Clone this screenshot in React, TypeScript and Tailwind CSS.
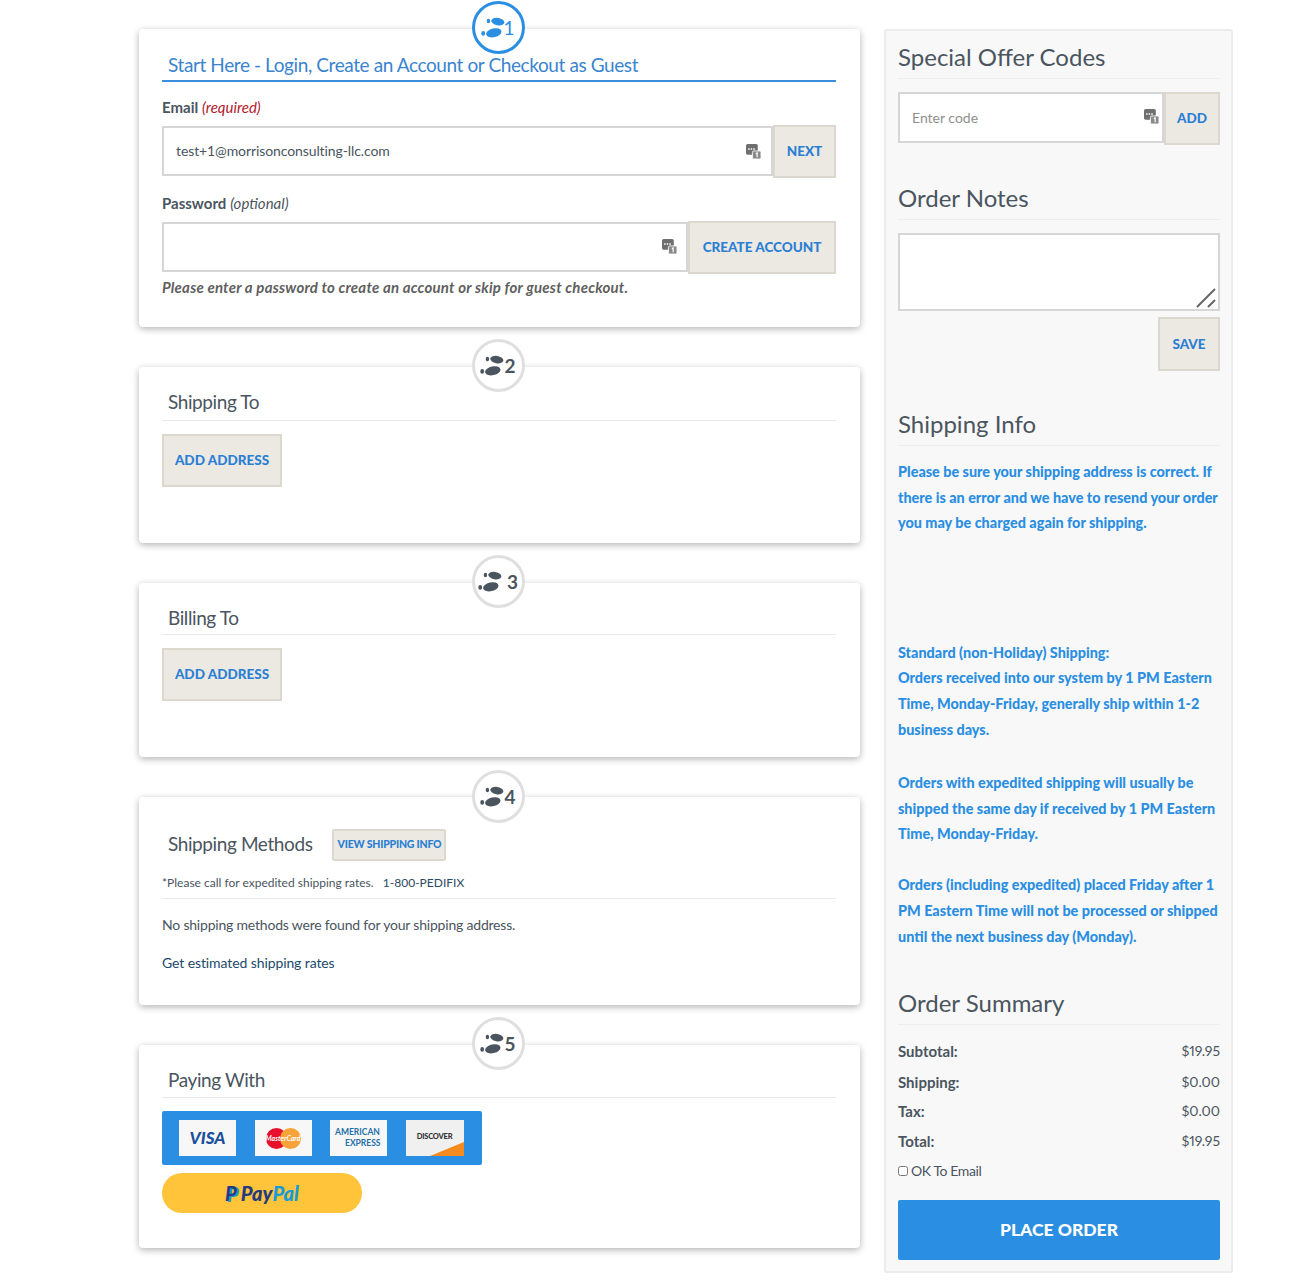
import React from "react";

const font = "font-['Lato','Open_Sans',sans-serif]";

// little password-manager badge that sits inside the inputs
const KeyIcon = ({ className }: { className: string }) => (
  <svg viewBox="0 0 14 14" className={className}>
    <rect x="0" y="0" width="11" height="10" rx="1.5" fill="#6f6f6f" />
    <rect x="6" y="6.5" width="8" height="7.5" rx="1.2" fill="#8a8a8a" stroke="#fff" strokeWidth="0.8" />
    <rect x="2" y="4" width="1.4" height="1.4" fill="#fff" />
    <rect x="4.4" y="4" width="1.4" height="1.4" fill="#fff" />
    <rect x="6.8" y="4" width="1.4" height="1.4" fill="#fff" />
    <path d="M9.2 9 L10.4 8.4 V12.4" stroke="#fff" strokeWidth="1.1" fill="none" />
  </svg>
);

const Feet = ({ className }: { className: string }) => (
  <svg viewBox="0 0 24 21" className={className} fill="currentColor">
    <ellipse cx="16.8" cy="4.6" rx="6.6" ry="3.7" transform="rotate(10 16.8 4.6)" />
    <ellipse cx="7.4" cy="4" rx="1.7" ry="2.3" />
    <ellipse cx="12.8" cy="15.8" rx="7.8" ry="4.4" transform="rotate(-12 12.8 15.8)" />
    <ellipse cx="2.2" cy="16.4" rx="1.9" ry="2.4" />
  </svg>
);

const Step = ({ n, active, extra }: { n: string; active?: boolean; extra?: string }) => (
  <div
    className={`absolute left-[333px] top-[-28px] w-[53px] h-[53px] rounded-full bg-white border-[3px] flex items-center justify-center ${
      active ? "border-[#2a8ee2] text-[#2a8ee2]" : "border-[#dfdfdf] text-[#4a5560]"
    } ${extra ?? ""}`}
  >
    <Feet className="w-[24px] h-[21px] -ml-[1px]" />
    <span className={`text-[19px] leading-none ${active ? "font-normal -ml-[2px]" : "font-bold"}`}>{n}</span>
  </div>
);

const CardTitle = ({ children, h }: { children: React.ReactNode; h: string }) => (
  <div className={`${h} border-b border-[#e9e9e9] pl-[6px] text-[19px] tracking-[-0.4px] leading-[22px] text-[#4a5560]`}>
    {children}
  </div>
);

const BeigeBtn = ({ children, className }: { children: React.ReactNode; className: string }) => (
  <button className={`bg-[#ece9e2] border-2 border-[#dcd8cd] text-[#2a7fd5] text-[13.5px] font-black shrink-0 ${className}`}>
    {children}
  </button>
);

const SideTitle = ({ children, className }: { children: React.ReactNode; className?: string }) => (
  <h3 className={`h-[41px] border-b border-[#eeeeee] text-[24px] leading-[38px] text-[#4a5560] ${className ?? ""}`}>
    {children}
  </h3>
);

const SummaryRow = ({ label, value }: { label: string; value: string }) => (
  <div className="h-[30px] flex items-center justify-between text-[#4a5560]">
    <span className="text-[15px] font-bold">{label}</span>
    <span className="text-[14px] proportional-nums">{value}</span>
  </div>
);

const App = () => {
  return (
    <div className={`bg-white min-h-[1284px] pl-[139px] pt-[29px] flex items-start gap-[24px] ${font}`}>
      {/* Checkout steps */}
      <div className="w-[721px] flex flex-col gap-[40px]">
        <section className="relative h-[298px] bg-white rounded-[4px] shadow-[0_2px_7px_rgba(0,0,0,0.3)] pl-[23px] pr-[24px] pt-[24px]">
          <Step n="1" active />
          <div className="h-[29px] border-b-2 border-[#3a8edb] pl-[6px] text-[19px] tracking-[-0.4px] leading-[24px] text-[#3a84cf]">
            Start Here - Login, Create an Account or Checkout as Guest
          </div>
          <div className="mt-[16px] h-[18px] text-[15px] leading-[18px] text-[#4a5560]">
            <b>Email</b> <i className="text-[#b2202c]">(required)</i>
          </div>
          <div className="mt-[9px] flex items-start">
            <div className="relative flex-1 mt-[1px] h-[50px] border-2 border-[#d6d6d6] bg-white flex items-center pl-[12px] pb-[1px] text-[14px] tracking-[-0.1px] text-[#4a5560]">
              test+1@morrisonconsulting-llc.com
              <KeyIcon className="absolute right-[10px] top-[16px] w-[15px] h-[15px]" />
            </div>
            <BeigeBtn className="w-[63px] h-[53px]">NEXT</BeigeBtn>
          </div>
          <div className="mt-[16px] h-[18px] text-[15px] leading-[18px] text-[#4a5560]">
            <b>Password</b> <i>(optional)</i>
          </div>
          <div className="mt-[9px] flex items-start">
            <div className="relative flex-1 mt-[1px] h-[50px] border-2 border-[#d6d6d6] bg-white">
              <KeyIcon className="absolute right-[9px] top-[15px] w-[15px] h-[15px]" />
            </div>
            <BeigeBtn className="w-[148px] h-[53px]">CREATE ACCOUNT</BeigeBtn>
          </div>
          <p className="mt-[4px] h-[18px] text-[15px] tracking-[0.2px] leading-[18px] font-bold italic text-[#5f5f5f] whitespace-nowrap">
            Please enter a password to create an account or skip for guest checkout.
          </p>
        </section>

        <section className="relative h-[176px] bg-white rounded-[4px] shadow-[0_2px_7px_rgba(0,0,0,0.3)] pl-[23px] pr-[24px] pt-[24px]">
          <Step n="2" />
          <CardTitle h="h-[30px]">Shipping To</CardTitle>
          <BeigeBtn className="mt-[13px] w-[120px] h-[53px]">ADD ADDRESS</BeigeBtn>
        </section>

        <section className="relative h-[174px] bg-white rounded-[4px] shadow-[0_2px_7px_rgba(0,0,0,0.3)] pl-[23px] pr-[24px] pt-[24px]">
          <Step n="3" extra="gap-[5px]" />
          <CardTitle h="h-[28px]">Billing To</CardTitle>
          <BeigeBtn className="mt-[13px] w-[120px] h-[53px]">ADD ADDRESS</BeigeBtn>
        </section>

        <section className="relative h-[208px] bg-white rounded-[4px] shadow-[0_2px_7px_rgba(0,0,0,0.3)] pl-[23px] pr-[24px] pt-[32px]">
          <Step n="4" extra="mt-[1px]" />
          <div className="flex items-center h-[32px] pl-[6px] text-[19px] tracking-[-0.4px] text-[#4a5560]">
            <span className="mb-[1px]">Shipping Methods</span>
            <button className="ml-[20px] w-[114px] h-[32px] bg-[#ece9e2] border-2 border-[#dcd8cd] rounded-[2px] text-[10.5px] tracking-[-0.2px] font-black text-[#2a7fd5] whitespace-nowrap">
              VIEW SHIPPING INFO
            </button>
          </div>
          <div className="mt-[13px] h-[18px] text-[12px] leading-[18px] text-[#4a5560] whitespace-pre">
            *Please call for expedited shipping rates.{"   "}<span className="text-[#2d4a63]">1-800-PEDIFIX</span>
          </div>
          <div className="mt-[6px] border-t border-[#e9e9e9]" />
          <p className="mt-[16px] text-[14px] tracking-[-0.2px] leading-[20px] text-[#4a5560]">
            No shipping methods were found for your shipping address.
          </p>
          <p className="mt-[18px] text-[14px] tracking-[-0.1px] leading-[20px] text-[#1d4a6b]">Get estimated shipping rates</p>
        </section>

        <section className="relative h-[203px] bg-white rounded-[4px] shadow-[0_2px_7px_rgba(0,0,0,0.3)] pl-[23px] pr-[24px] pt-[24px]">
          <Step n="5" />
          <CardTitle h="h-[29px]">Paying With</CardTitle>
          <div className="mt-[13px] w-[320px] h-[54px] bg-[#2a8ee2] rounded-[2px] flex items-center pl-[17px] gap-[18.5px]">
            <div className="relative w-[57px] h-[36px] bg-[#f7f7f7] flex items-center justify-center text-[17px] font-black italic text-[#1a4f9c]">
              VISA
            </div>
            <div className="relative w-[57px] h-[36px] bg-[#f7f7f7] flex items-center justify-center">
              <div className="w-[21px] h-[21px] rounded-full bg-[#e8112d]" />
              <div className="w-[21px] h-[21px] rounded-full bg-[#f7a33a] -ml-[7px]" />
              <span className="absolute text-[7px] font-bold italic text-white">MasterCard</span>
            </div>
            <div className="w-[57px] h-[36px] bg-[#f7f7f7] flex flex-col items-start justify-center pl-[5px] text-[8.5px] leading-[11px] font-bold text-[#1d6fa8]">
              <span>AMERICAN</span>
              <span className="pl-[10px]">EXPRESS</span>
            </div>
            <div className="relative w-[58px] h-[36px] bg-[#f0f0f0] overflow-hidden flex items-center justify-center text-[7.5px] tracking-[-0.2px] font-black text-[#333]">
              <svg viewBox="0 0 58 36" className="absolute inset-0 w-[58px] h-[36px]">
                <path d="M24 36 L58 22 V36 Z" fill="#f58a1f" />
              </svg>
              <span className="relative pb-[3px]">DISCOVER</span>
            </div>
          </div>
          <div className="mt-[8px] w-[200px] h-[40px] rounded-full bg-[#ffc439] flex items-center justify-center text-[20px] font-black italic">
            <span className="text-[#253b80] mr-[4px] [text-shadow:2px_1px_0_#179bd7]">P</span>
            <span className="text-[#253b80]">Pay</span>
            <span className="text-[#179bd7]">Pal</span>
          </div>
        </section>
      </div>

      {/* Sidebar */}
      <aside className="w-[349px] h-[1244px] bg-[#f8f8f8] border-2 border-[#ececec] rounded-[3px] pt-[7px] pl-[12px] pr-[11px]">
        <SideTitle>Special Offer Codes</SideTitle>
        <div className="mt-[13px] flex items-start">
          <div className="relative flex-1 h-[51px] border-2 border-[#d6d6d6] bg-white flex items-center pl-[12px] pb-[1px] text-[14px] text-[#8f8f8f]">
            Enter code
            <KeyIcon className="absolute right-[3px] top-[15px] w-[15px] h-[15px]" />
          </div>
          <BeigeBtn className="w-[56px] h-[53px]">ADD</BeigeBtn>
        </div>

        <SideTitle className="mt-[34px]">Order Notes</SideTitle>
        <div className="relative mt-[13px] h-[78px] border-2 border-[#d6d6d6] bg-white">
          <svg viewBox="0 0 20 20" className="absolute right-[2px] bottom-[1px] w-[20px] h-[20px]">
            <path d="M1 19 L19 1 M12 19 L19 12" stroke="#666" strokeWidth="2" />
          </svg>
        </div>
        <div className="mt-[6px] flex justify-end">
          <BeigeBtn className="w-[62px] h-[54px]">SAVE</BeigeBtn>
        </div>

        <SideTitle className="mt-[34px]">Shipping Info</SideTitle>
        <div className="text-[14.4px] leading-[25.6px] font-black text-[#2a8ee2] whitespace-nowrap">
          <p className="mt-[13px]">
            Please be sure your shipping address is correct. If
            <br />
            there is an error and we have to resend your order
            <br />
            you may be charged again for shipping.
          </p>
          <p className="mt-[104px]">
            Standard (non-Holiday) Shipping:
            <br />
            Orders received into our system by 1 PM Eastern
            <br />
            Time, Monday-Friday, generally ship within 1-2
            <br />
            business days.
          </p>
          <p className="mt-[28px]">
            Orders with expedited shipping will usually be
            <br />
            shipped the same day if received by 1 PM Eastern
            <br />
            Time, Monday-Friday.
          </p>
          <p className="mt-[25px] leading-[26px]">
            Orders (including expedited) placed Friday after 1
            <br />
            PM Eastern Time will not be processed or shipped
            <br />
            until the next business day (Monday).
          </p>
        </div>

        <SideTitle className="mt-[34px]">Order Summary</SideTitle>
        <div className="mt-[11px]">
          <SummaryRow label="Subtotal:" value="$19.95" />
          <div className="mt-[1px]">
            <SummaryRow label="Shipping:" value="$0.00" />
          </div>
          <div className="-mt-[1px]">
            <SummaryRow label="Tax:" value="$0.00" />
          </div>
          <SummaryRow label="Total:" value="$19.95" />
        </div>
        <label className="h-[30px] flex items-center text-[14px] tracking-[-0.4px] text-[#4a5560]">
          <input type="checkbox" className="w-[10px] h-[10px] mr-[3px]" />
          OK To Email
        </label>
        <button className="mt-[14px] w-full h-[60px] bg-[#2a8ee2] rounded-[2px] text-white text-[17.5px] font-black">
          PLACE ORDER
        </button>
      </aside>
    </div>
  );
};

export default App;
